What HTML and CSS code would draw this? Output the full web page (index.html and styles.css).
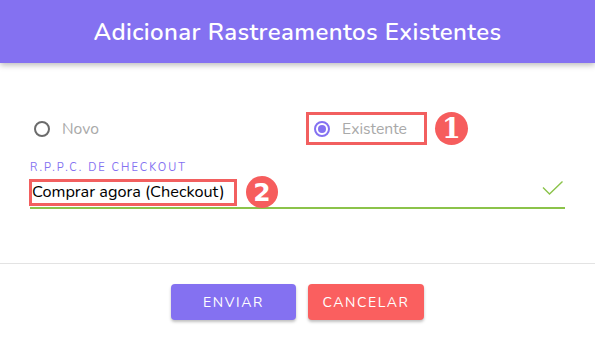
FILE: index.html
```html
<!DOCTYPE html>
<html lang="pt">
<head>
<meta charset="utf-8">
<link rel="stylesheet" href="styles.css">
</head>
<body>
<div class="dialog">
  <header class="title-bar">
    <h1 class="title">Adicionar Rastreamentos Existentes</h1>
  </header>
  <main class="content">
    <div class="radio-row">
      <div class="radio-col">
        <label class="radio">
          <span class="radio-circle"></span>
          <span class="radio-label">Novo</span>
        </label>
      </div>
      <div class="radio-col">
        <label class="radio radio-marked">
          <span class="radio-circle radio-checked"><span class="radio-dot"></span></span>
          <span class="radio-label">Existente</span>
        </label>
        <span class="badge badge-one">1</span>
      </div>
    </div>
    <div class="field">
      <div class="field-label">R.P.P.C. DE CHECKOUT</div>
      <div class="field-input">
        <span class="input-mark">Comprar agora (Checkout)</span>
        <span class="badge badge-two">2</span>
        <svg class="check" width="22" height="16" viewBox="0 0 22 16">
          <path d="M1 6.5 L7.5 13 L20.5 0.5" fill="none" stroke="#8bc34a" stroke-width="1.4"/>
        </svg>
      </div>
    </div>
  </main>
  <footer class="actions">
    <button class="btn btn-primary">ENVIAR</button>
    <button class="btn btn-danger">CANCELAR</button>
  </footer>
</div>
</body>
</html>
```

FILE: styles.css
```css
* { box-sizing: border-box; }
html, body {
  margin: 0;
  padding: 0;
  background: #ffffff;
}
body {
  font-family: "Nunito", "Lato", "Open Sans", sans-serif;
  width: 595px;
  height: 340px;
  overflow: hidden;
}
.dialog {
  display: flex;
  flex-direction: column;
  height: 340px;
}
.title-bar {
  height: 63px;
  background: #8471f1;
  display: flex;
  align-items: center;
  justify-content: center;
  box-shadow: 0 2px 6px rgba(0,0,0,0.28);
  position: relative;
  z-index: 1;
}
.title {
  margin: 0;
  color: #ffffff;
  font-size: 24px;
  font-weight: 600;
  letter-spacing: 0.4px;
}
.content {
  padding: 49px 30px 0 30px;
  height: 201px;
  border-bottom: 1px solid #e3e3e3;
}
.radio-row {
  display: grid;
  grid-template-columns: 276px 1fr;
  height: 33px;
  align-items: center;
}
.radio-col {
  display: flex;
  align-items: center;
}
.radio {
  display: flex;
  align-items: center;
  gap: 12px;
  padding-left: 4px;
}
.radio-marked {
  border: 3px solid #f25f5f;
  height: 33px;
  width: 121px;
  padding-left: 5px;
}
.radio-circle {
  width: 16px;
  height: 16px;
  border: 2px solid #6b6b6b;
  border-radius: 50%;
  display: flex;
  align-items: center;
  justify-content: center;
}
.radio-checked {
  border-color: #8471f1;
}
.radio-dot {
  width: 8px;
  height: 8px;
  border-radius: 50%;
  background: #8471f1;
}
.radio-label {
  color: #a9a9a9;
  font-size: 15.7px;
}
.badge {
  display: inline-flex;
  align-items: center;
  justify-content: center;
  border-radius: 50%;
  background: #f65d5d;
  color: #ffffff;
  font-weight: bold;
}
.badge-one {
  width: 33px;
  height: 33px;
  margin-left: 8px;
  font-family: "DejaVu Serif", serif;
  font-size: 27px;
  line-height: 1;
}
.badge-two {
  width: 32px;
  height: 32px;
  margin-left: 9px;
  font-family: "DejaVu Sans", sans-serif;
  font-size: 25px;
  line-height: 1;
}
.field {
  margin-top: 17px;
}
.field-label {
  color: #8471f1;
  font-size: 11px;
  letter-spacing: 2px;
  line-height: 12px;
}
.field-input {
  margin-top: 3px;
  display: flex;
  align-items: center;
  height: 32px;
  border-bottom: 2px solid #8bc34a;
  position: relative;
}
.input-mark {
  border: 3px solid #f25f5f;
  height: 27px;
  width: 208px;
  margin-left: -1px;
  padding-left: 0;
  display: flex;
  align-items: center;
  color: #000000;
  font-size: 16.3px;
  white-space: nowrap;
}
.check {
  margin-left: auto;
  margin-right: 1px;
  margin-top: -6px;
}
.actions {
  display: flex;
  justify-content: center;
  gap: 12px;
  padding-top: 20px;
}
.btn {
  height: 36px;
  border: none;
  border-radius: 4px;
  color: #ffffff;
  font-family: "Nunito", "Lato", "Open Sans", sans-serif;
  font-size: 14px;
  letter-spacing: 1.6px;
  box-shadow: 0 2px 3px rgba(0,0,0,0.25);
}
.btn-primary {
  width: 125px;
  background: #8471f1;
}
.btn-danger {
  width: 116px;
  background: #fa5f5f;
}
```
